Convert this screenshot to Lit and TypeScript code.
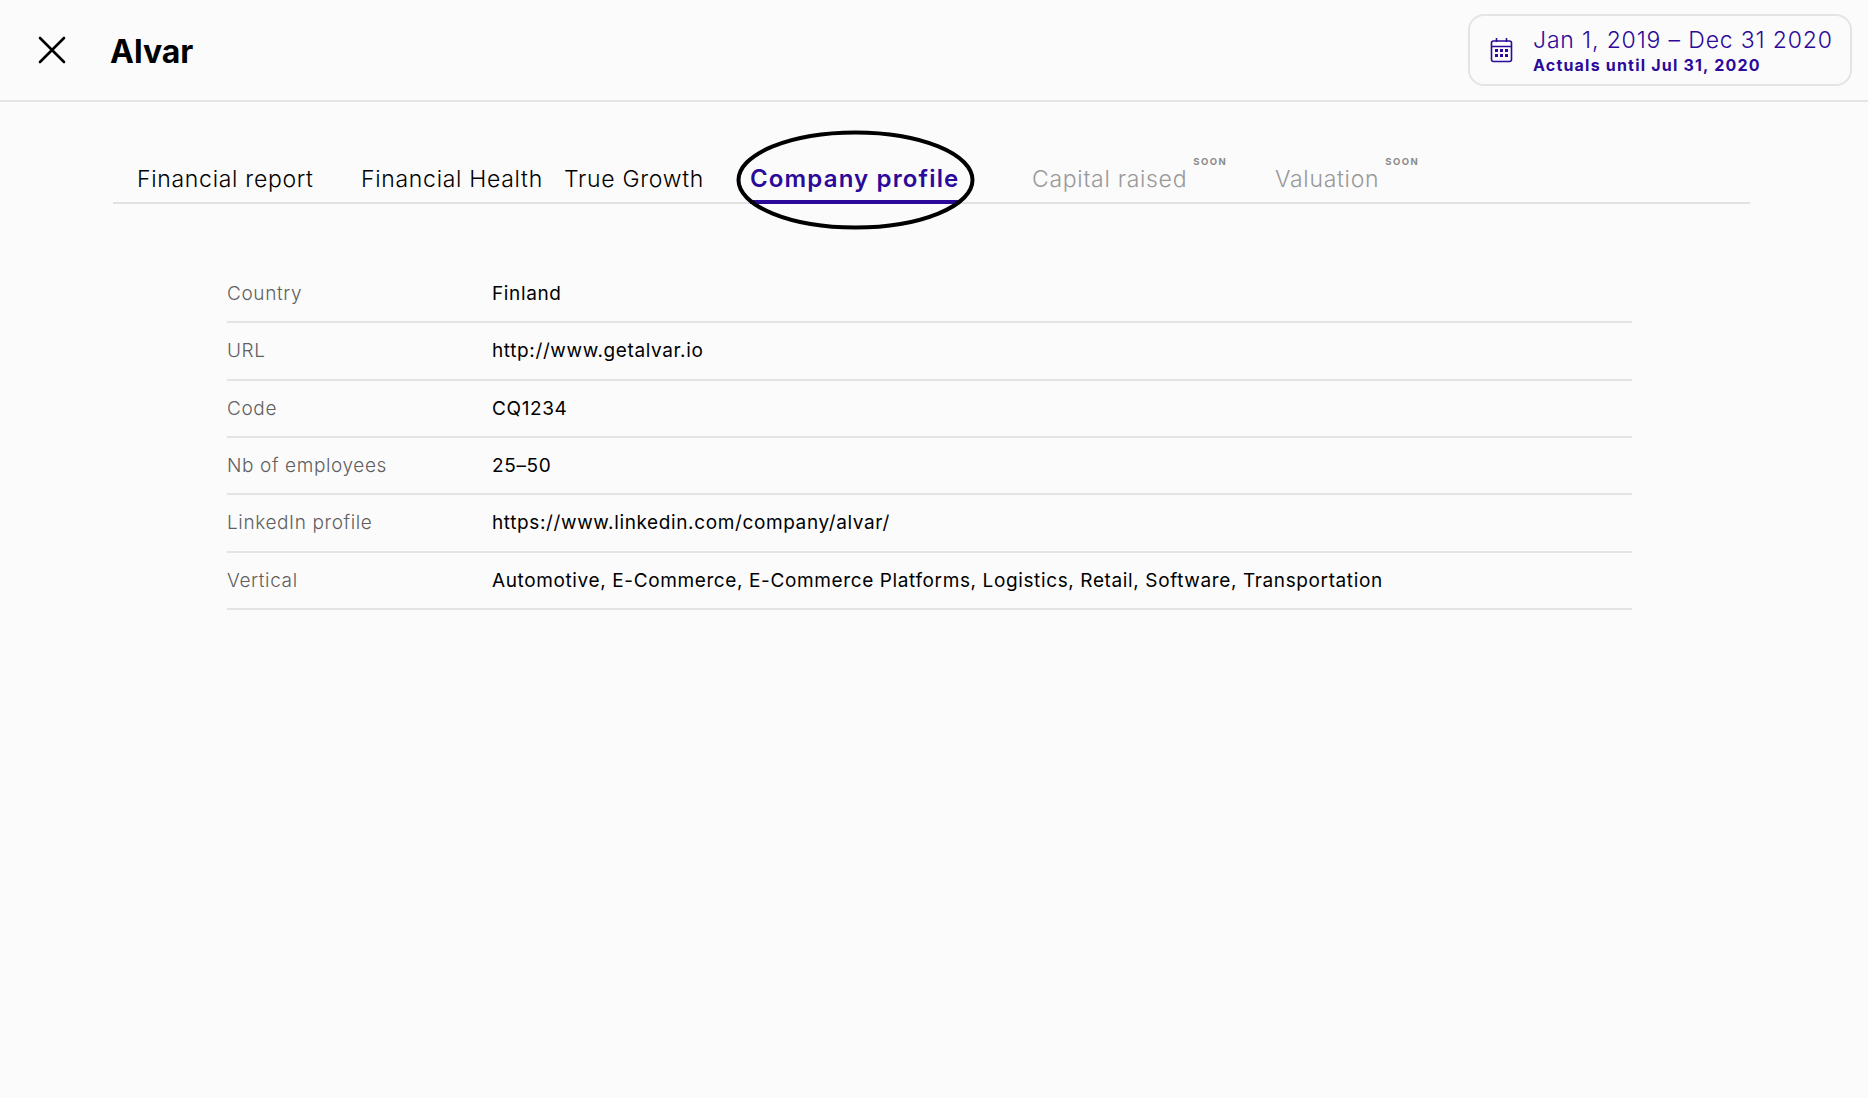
import { LitElement, html, css } from "lit";
import { customElement } from "lit/decorators.js";

const rows: [string, string][] = [
  ["Country", "Finland"],
  ["URL", "http://www.getalvar.io"],
  ["Code", "CQ1234"],
  ["Nb of employees", "25–50"],
  ["LinkedIn profile", "https://www.linkedin.com/company/alvar/"],
  ["Vertical", "Automotive, E-Commerce, E-Commerce Platforms, Logistics, Retail, Software, Transportation"],
];

@customElement("app-root")
export class AppRoot extends LitElement {
  static styles = css`
    :host { display: block; min-height: 1098px; background: #fbfbfb; font-family: "Inter", "Noto Sans", sans-serif; color: #000; }
    header { height: 100px; border-bottom: 2px solid #e6e6e6; display: flex; align-items: center; padding: 0 16px 0 38px; box-sizing: content-box; }
    .close { width: 28px; height: 28px; display: block; }
    h1 { margin: 3px 0 0 44px; font-size: 32px; font-weight: 700; letter-spacing: 0; }
    .date { margin-left: auto; width: 384px; height: 72px; box-sizing: border-box; border: 2px solid #e4e4e4; border-radius: 16px; display: flex; align-items: center; padding-left: 20px; color: #2b0a9a; }
    .date svg { width: 23px; height: 26px; flex: none; margin-right: 20px; }
    .d1 { font-size: 23px; line-height: 27px; font-weight: 300; letter-spacing: 0.85px; margin-top: 2px; }
    .d2 { font-size: 16px; line-height: 22px; font-weight: 700; letter-spacing: 1.2px; }
    nav { margin: 0 118px 0 113px; height: 100px; border-bottom: 2px solid #e2e2e2; display: flex; align-items: flex-end; position: relative; box-sizing: content-box; }
    .tab { font-size: 23px; line-height: 28px; height: 37px; position: relative; white-space: nowrap; font-weight: 300; letter-spacing: 0.7px; }
    .tab.off { color: #999; }
    .tab.on { color: #2b0a9a; font-size: 24px; font-weight: 600; letter-spacing: 1.15px; border-bottom: 4px solid #2b0a9a; height: 35px; margin-bottom: -2px; }
    .tab sup { position: absolute; left: 100%; top: -9px; margin-left: 6px; font-size: 9.5px; line-height: 12px; font-weight: 700; letter-spacing: 1.5px; color: #8a8a8a; }
    .ring { position: absolute; left: 624px; top: 29px; width: 237px; height: 98px; overflow: visible; pointer-events: none; }
    .table { margin: 62px 236px 0 227px; }
    .row { height: 57.33px; box-sizing: border-box; border-bottom: 2px solid #e4e4e4; display: flex; align-items: center; font-size: 19px; font-weight: 300; letter-spacing: 0.62px; }
    .k { width: 265px; flex: none; color: #5f5f5f; }
    .v { color: #000; font-weight: 400; }
  `;

  render() {
    return html`
      <header>
        <svg class="close" viewBox="0 0 28 28" fill="none" stroke="#000" stroke-width="2.6" stroke-linecap="round"><path d="M2 2 L26 26 M26 2 L2 26"/></svg>
        <h1>Alvar</h1>
        <div class="date">
          <svg viewBox="0 0 23 26" fill="none" stroke="#2b0a9a" stroke-width="1.6">
            <rect x="1.5" y="4" width="20" height="20.5" rx="2"/>
            <path d="M1.5 9.5 H21.5 M6.5 1 V5 M16.5 1 V5"/>
            <g fill="#2b0a9a" stroke="none">
              <rect x="5" y="12" width="3" height="3"/><rect x="10" y="12" width="3" height="3"/><rect x="15" y="12" width="3" height="3"/>
              <rect x="5" y="17" width="3" height="3"/><rect x="10" y="17" width="3" height="3"/><rect x="15" y="17" width="3" height="3"/>
            </g>
          </svg>
          <div>
            <div class="d1">Jan 1, 2019 – Dec 31 2020</div>
            <div class="d2">Actuals until Jul 31, 2020</div>
          </div>
        </div>
      </header>
      <nav>
        <div class="tab" style="margin-left:24px;width:224px">Financial report</div>
        <div class="tab" style="width:203px">Financial Health</div>
        <div class="tab" style="width:186px">True Growth</div>
        <div class="tab on" style="width:210px">Company profile</div>
        <div class="tab off" style="margin-left:72px;width:243px"><span style="position:relative">Capital raised<sup>SOON</sup></span></div>
        <div class="tab off"><span style="position:relative">Valuation<sup>SOON</sup></span></div>
        <svg class="ring" viewBox="0 0 237 98" fill="none"><ellipse cx="118.5" cy="49" rx="117" ry="47.5" stroke="#000" stroke-width="4"/></svg>
      </nav>
      <div class="table">
        ${rows.map(([k, v]) => html`<div class="row"><div class="k">${k}</div><div class="v">${v}</div></div>`)}
      </div>
    `;
  }
}
